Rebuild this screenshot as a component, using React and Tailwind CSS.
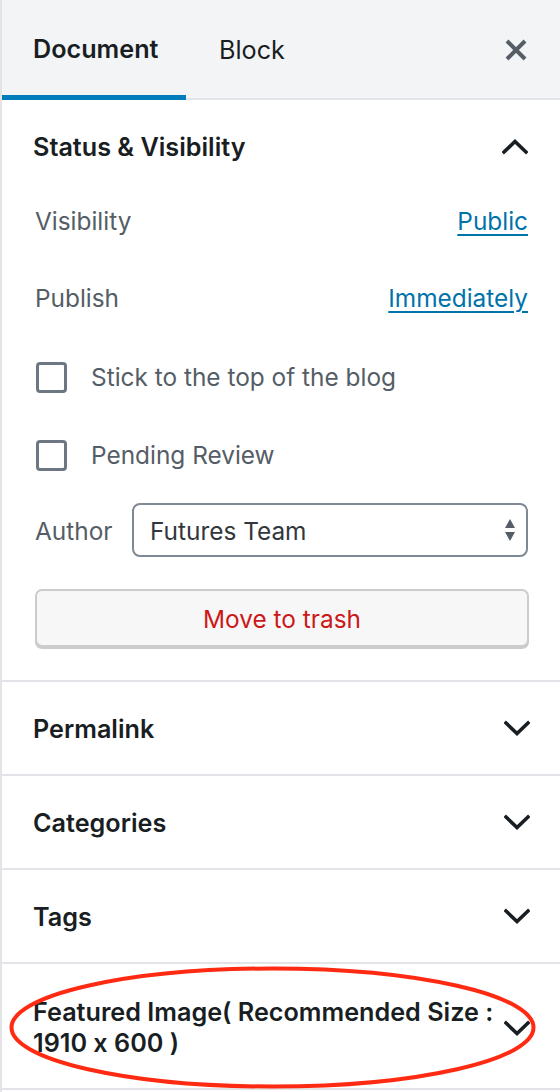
import React from "react";

function Chevron({ up }) {
  return (
    <svg width="26" height="16" viewBox="0 0 26 16" className="shrink-0">
      <polyline
        points={up ? "2,13 13,2.5 24,13" : "2,3 13,13.5 24,3"}
        fill="none"
        stroke="#191e23"
        strokeWidth="3.6"
        strokeLinecap="square"
      />
    </svg>
  );
}

function Checkbox({ label }) {
  return (
    <div className="flex items-center h-[52px]">
      <span className="w-[31px] h-[31px] border-[3px] border-[#6c7781] rounded-[4px] bg-white shrink-0" />
      <span className="ml-[24px] text-[24.4px] text-[#555d66]">{label}</span>
    </div>
  );
}

function Section({ title }) {
  return (
    <div className="flex items-center justify-between border-b-2 border-[#e2e4e7] pl-[31px] pr-[32px] h-[94px]">
      <span className="text-[25.2px] font-semibold text-[#191e23] leading-[31px] pt-[2px]">{title}</span>
      <div className="w-[24px] flex justify-center mr-[-1px]">
        <Chevron />
      </div>
    </div>
  );
}

export default function App() {
  return (
    <div className="relative w-[560px] min-h-[1092px] bg-white border-l-2 border-[#e2e4e7] font-['Inter',sans-serif] [font-feature-settings:'calt'_0] overflow-hidden">
      {/* tabs */}
      <div className="flex items-stretch h-[100px] bg-[#f3f4f5] border-b-2 border-[#e2e4e7]">
        <div className="w-[184px] flex items-center pl-[31px] border-b-[5px] border-[#007cba] mb-[-2px] pt-[5px]">
          <span className="text-[25.2px] font-semibold text-[#191e23]">Document</span>
        </div>
        <div className="flex items-center pl-[33px] pt-[3px]">
          <span className="text-[25.2px] text-[#191e23]">Block</span>
        </div>
        <div className="ml-auto flex items-center pr-[33px] pt-[1px]">
          <svg width="22" height="22" viewBox="0 0 22 22">
            <path d="M2 2 L20 20 M20 2 L2 20" stroke="#555d66" strokeWidth="4" fill="none" />
          </svg>
        </div>
      </div>

      {/* status & visibility */}
      <div className="border-b-2 border-[#e2e4e7] pl-[31px] pr-[32px] pb-[33px]">
        <div className="flex items-center justify-between h-[94px]">
          <span className="text-[25.2px] font-semibold text-[#191e23] pt-[2px]">Status &amp; Visibility</span>
          <Chevron up />
        </div>

        <div className="flex items-center justify-between h-[52px] pl-[2px] pt-[2px]">
          <span className="text-[24.4px] text-[#555d66]">Visibility</span>
          <a className="text-[24.4px] text-[#0073aa] underline underline-offset-[4px] decoration-[2px]">Public</a>
        </div>
        <div className="flex items-center justify-between h-[52px] mt-[25px] pl-[2px] pt-[2px]">
          <span className="text-[24.4px] text-[#555d66]">Publish</span>
          <a className="text-[24.4px] text-[#0073aa] underline underline-offset-[4px] decoration-[2px]">Immediately</a>
        </div>

        <div className="mt-[28px] pl-[3px]">
          <Checkbox label="Stick to the top of the blog" />
        </div>
        <div className="mt-[26px] pl-[3px]">
          <Checkbox label="Pending Review" />
        </div>

        <div className="flex items-center mt-[22px] pl-[2px]">
          <span className="text-[24.4px] text-[#555d66] w-[97px] pt-[2px]">Author</span>
          <div className="flex-1 flex items-center justify-between h-[54px] border-2 border-[#7e8993] rounded-[8px] pl-[16px] pr-[10px]">
            <span className="text-[24.4px] text-[#32373c] pt-[2px]">Futures Team</span>
            <svg width="12" height="24" viewBox="0 0 12 24">
              <path d="M6 1 L11 10 L1 10 Z" fill="#555d66" />
              <path d="M1 14 L11 14 L6 23 Z" fill="#555d66" />
            </svg>
          </div>
        </div>

        <button className="mt-[32px] ml-[2px] w-[494px] h-[58px] bg-[#f7f7f7] border-2 border-[#cccccc] rounded-[7px] shadow-[0_2px_0_#cccccc] text-[24.4px] text-[#cc1818] flex items-center justify-center pt-[2px]">
          Move to trash
        </button>
      </div>

      <Section title="Permalink" />
      <Section title="Categories" />
      <Section title="Tags" />
      <div className="flex items-center justify-between border-b-2 border-[#e2e4e7] pl-[31px] pr-[32px] pt-[33px] pb-[29px]">
        <span className="text-[25.2px] font-semibold text-[#191e23] leading-[31px]">
          Featured Image( Recommended Size :<br />1910 x 600 )
        </span>
        <div className="w-[24px] flex justify-center mr-[-1px]">
          <Chevron />
        </div>
      </div>

      {/* annotation */}
      <svg className="absolute left-[-2px] top-0 pointer-events-none" width="560" height="1092" viewBox="0 0 560 1092">
        <ellipse cx="272.5" cy="1027.5" rx="261" ry="59" fill="none" stroke="#ff2a12" strokeWidth="4" />
      </svg>
    </div>
  );
}
